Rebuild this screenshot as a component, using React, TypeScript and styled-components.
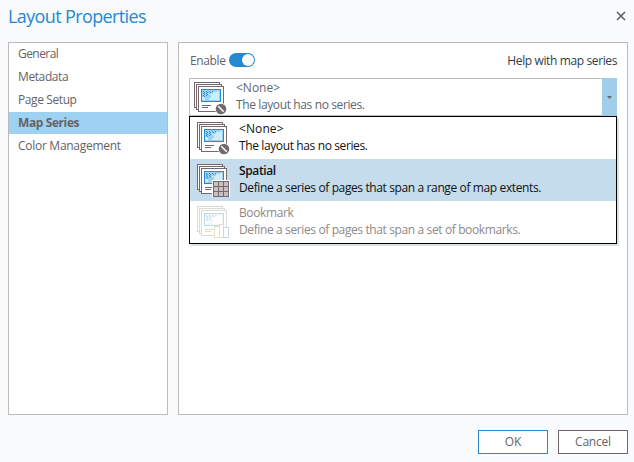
import React from "react";
import styled, { createGlobalStyle, css } from "styled-components";

const GlobalStyle = createGlobalStyle`
  * { box-sizing: border-box; }
  body { margin: 0; background: #f8fafb; overflow: hidden; }
`;

const Dialog = styled.div`
  width: 634px;
  height: 462px;
  display: flex;
  flex-direction: column;
  padding: 0 6px 8px 8px;
  background: #f8fafb;
  color: #656367;
  font: 12px/16px "Open Sans", "Noto Sans", sans-serif;
  white-space: nowrap;
`;

const TitleBar = styled.header`
  height: 42px;
  display: flex;
  justify-content: space-between;
`;

const Title = styled.h1`
  margin: 4px 0 0;
  font-size: 18px;
  line-height: 24px;
  font-weight: 400;
  letter-spacing: -0.62px;
  color: #2588d0;
`;

const CloseButton = styled.button`
  width: 14px;
  height: 14px;
  margin-top: 9px;
  padding: 0;
  border: 0;
  background: none;
  display: grid;
  place-items: center;
`;

const Body = styled.main`
  display: grid;
  grid-template-columns: 160px 450px;
  gap: 10px;
  height: 373px;
`;

const Sidebar = styled.nav`
  border: 1px solid #bcbcbe;
  background: #fff;
  display: flex;
  flex-direction: column;
  gap: 1px;
`;

const NavItem = styled.a<{ $selected?: boolean; $spacing: number }>`
  height: 22px;
  padding-left: 9px;
  line-height: 22px;
  letter-spacing: ${(p) => p.$spacing}px;
  ${(p) => p.$selected && css`
    background: #9ed2f2;
    font-weight: 700;
  `}
`;

const Panel = styled.section`
  border: 1px solid #bcbcbe;
  background: #fff;
  padding: 10px 10px 0;
`;

const EnableRow = styled.div`
  height: 14px;
  display: flex;
  align-items: center;
  padding-left: 1px;
`;

const Label = styled.span<{ $spacing?: number }>`
  letter-spacing: ${(p) => p.$spacing ?? -0.38}px;
`;

const EnableLabel = styled(Label)`
  width: 39px;
  padding-top: 2px;
`;

const Toggle = styled.span`
  width: 26px;
  height: 14px;
  border-radius: 7px;
  background: #2588d0;
  display: flex;
  justify-content: flex-end;
  padding: 1px;
`;

const Knob = styled.span`
  width: 12px;
  height: 12px;
  border-radius: 50%;
  background: #f7f8f8;
`;

const HelpLink = styled(Label)`
  margin-left: auto;
  padding-top: 2px;
  color: #303c47;
`;

const Combo = styled.div`
  position: relative;
  height: 38px;
  margin-top: 11px;
  display: flex;
  border: 1px solid #bcbcbe;
  border-right: 0;
`;

const ComboValue = styled.div`
  flex: 1;
  display: flex;
  padding: 3px 0 0 4px;
`;

const OptionText = styled.div`
  display: flex;
  flex-direction: column;
  margin: -2px 0 0 9px;
  line-height: 17px;
`;

const ComboText = styled(OptionText)`
  margin-top: -3px;
  color: #5c6670;
`;

const ComboArrow = styled.div`
  width: 15px;
  margin: -1px 0;
  background: #a0cdea;
  display: grid;
  place-items: center;
`;

const Menu = styled.div`
  position: absolute;
  top: 37px;
  left: -1px;
  width: 428px;
  height: 128px;
  border: 1px solid #000;
  background: #fff;
  box-shadow: 2px 2px 0 #dce2e3;
`;

const Option = styled.div<{ $active?: boolean; $disabled?: boolean }>`
  height: 42px;
  display: flex;
  padding: 5px 0 0 7px;
  color: ${(p) => (p.$disabled ? "#8e8988" : "#111")};
  background: ${(p) => (p.$active ? "#c5dcec" : "#fff")};
`;

const OptionName = styled(Label)<{ $bold?: boolean }>`
  font-weight: ${(p) => (p.$bold ? 600 : 400)};
`;

const Footer = styled.footer`
  display: flex;
  justify-content: flex-end;
  gap: 10px;
  margin-top: 15px;
`;

const Button = styled.button<{ $primary?: boolean }>`
  width: 70px;
  height: 24px;
  padding: 0;
  border: 1px solid ${(p) => (p.$primary ? "#2588d0" : "#6f6468")};
  background: #fff;
  color: #656367;
  font: 12px/20px "Open Sans", "Noto Sans", sans-serif;
  letter-spacing: -0.2px;
`;

type IconKind = "none" | "spatial" | "bookmark";

function SeriesIcon({ kind }: { kind: IconKind }) {
  const faded = kind === "bookmark";
  const stroke = faded ? "#d8dcd5" : "#75686c";
  return (
    <svg width="33" height="33" viewBox="0 0 33 33" shapeRendering="crispEdges">
      <g fill="#fff" stroke={stroke}>
        <path d="M.5 .5h25v25h-25z" />
        <path d="M2.5 2.5h25v25h-25z" />
        <path d="M4.5 4.5h25v25h-25z" />
      </g>
      <path d="M7.5 7.5h19v12h-19z" fill={faded ? "#f3f8fa" : "#9dd3f2"} stroke={faded ? "#bfd9e8" : "#2588d0"} />
      <path
        d="M25 9v9H15v-2h2v-3h-2v-1h4v-2h4v-1zM8 15h3v3H8z"
        fill={faded ? "#fff" : "#d3ebf5"}
      />
      <path
        d="M9 9.5h1m2 0h1m2 0h1m2 0h1M10 10.5h1m2 0h1m2 0h1M9 11.5h1m2 0h1M10 12.5h1m2 0h1M9 13.5h1m2 0h1M10 14.5h1"
        stroke={faded ? "#bfd9e8" : "#2588d0"}
        fill="none"
      />
      <path d="M8 23.5h9M8 25.5h6" stroke={stroke} fill="none" />
      {kind === "none" && (
        <g shapeRendering="auto">
          <circle cx="27" cy="27" r="6" fill="#fff" />
          <circle cx="27" cy="27" r="5.3" fill="#75686c" />
          <path d="M24.3 24.3l5.4 5.4" stroke="#fff" strokeWidth="1.5" />
        </g>
      )}
      {kind === "spatial" && (
        <g>
          <path d="M15 16h18v17H15z" fill="#fff" />
          <path d="M16.5 17.5h15v15h-15z" fill="#c5c1c3" stroke="#75686c" />
          <path d="M21.5 17v15M26.5 17v15M16 22.5h15M16 27.5h15" stroke="#75686c" />
        </g>
      )}
      {faded && (
        <g fill="#fff">
          <path d="M17.5 20.5h6v11h-6z" stroke="#efe1b8" />
          <path d="M22.5 18.5h4v13h-4z" stroke="#e8dfc4" />
          <path d="M26.5 21.5h5v10h-5z" stroke="#c2dae8" />
        </g>
      )}
    </svg>
  );
}

export default function App() {
  return (
    <>
      <GlobalStyle />
      <Dialog>
        <TitleBar>
          <Title>Layout Properties</Title>
          <CloseButton aria-label="Close">
            <svg width="10" height="10" viewBox="0 0 10 10">
              <path d="M1 1l8 8M9 1L1 9" stroke="#5d5a5c" strokeWidth="1.5" />
            </svg>
          </CloseButton>
        </TitleBar>
        <Body>
          <Sidebar>
            <NavItem $spacing={-0.55}>General</NavItem>
            <NavItem $spacing={-0.4}>Metadata</NavItem>
            <NavItem $spacing={-0.4}>Page Setup</NavItem>
            <NavItem $spacing={-0.4} $selected>Map Series</NavItem>
            <NavItem $spacing={-0.28}>Color Management</NavItem>
          </Sidebar>
          <Panel>
            <EnableRow>
              <EnableLabel>Enable</EnableLabel>
              <Toggle><Knob /></Toggle>
              <HelpLink>Help with map series</HelpLink>
            </EnableRow>
            <Combo>
              <ComboValue>
                <SeriesIcon kind="none" />
                <ComboText>
                  <Label $spacing={0}>&lt;None&gt;</Label>
                  <Label>The layout has no series.</Label>
                </ComboText>
              </ComboValue>
              <ComboArrow>
                <svg width="5" height="3" viewBox="0 0 5 3"><path d="M0 0h5L2.5 3z" fill="#69676b" /></svg>
              </ComboArrow>
              <Menu>
                <Option>
                  <SeriesIcon kind="none" />
                  <OptionText>
                    <OptionName $spacing={0.1}>&lt;None&gt;</OptionName>
                    <Label>The layout has no series.</Label>
                  </OptionText>
                </Option>
                <Option $active>
                  <SeriesIcon kind="spatial" />
                  <OptionText>
                    <OptionName $bold>Spatial</OptionName>
                    <Label>Define a series of pages that span a range of map extents.</Label>
                  </OptionText>
                </Option>
                <Option $disabled>
                  <SeriesIcon kind="bookmark" />
                  <OptionText>
                    <OptionName>Bookmark</OptionName>
                    <Label>Define a series of pages that span a set of bookmarks.</Label>
                  </OptionText>
                </Option>
              </Menu>
            </Combo>
          </Panel>
        </Body>
        <Footer>
          <Button $primary>OK</Button>
          <Button>Cancel</Button>
        </Footer>
      </Dialog>
    </>
  );
}
